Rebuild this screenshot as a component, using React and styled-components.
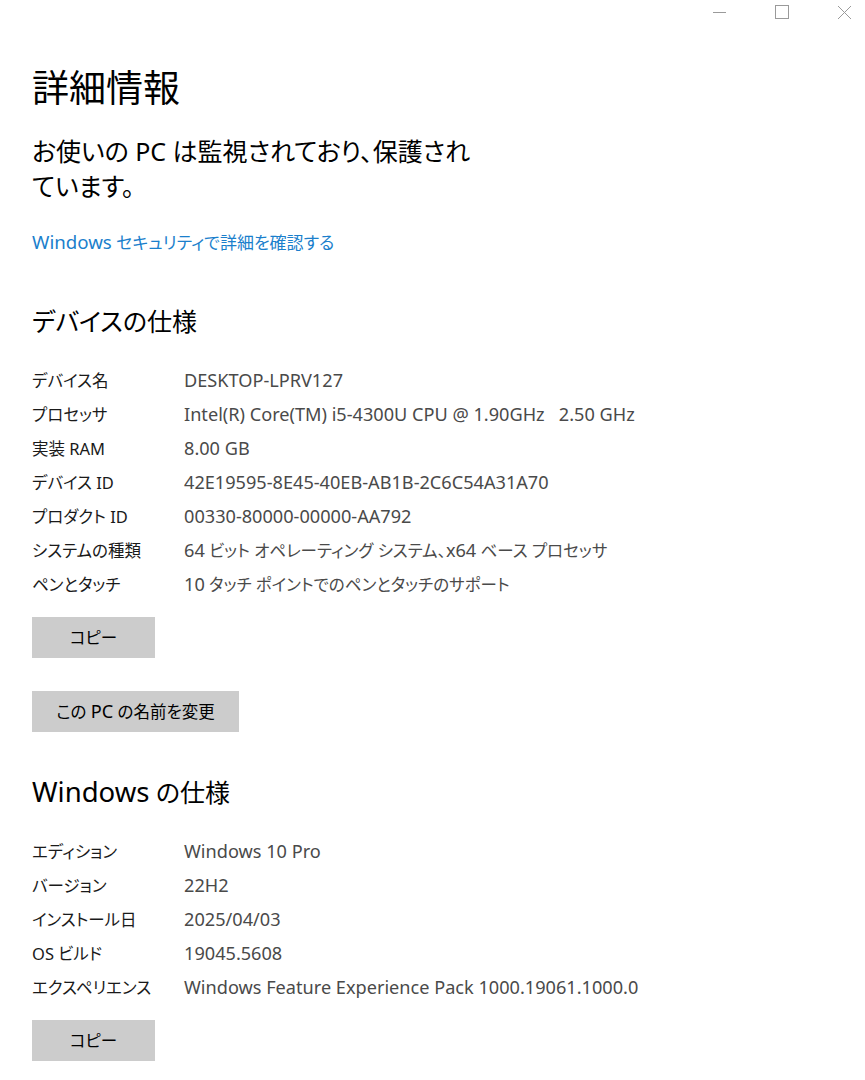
import styled, { createGlobalStyle } from "styled-components";

const GlobalStyle = createGlobalStyle`
    html, body {
        margin: 0;
        padding: 0;
        background: #ffffff;
        overflow: hidden;
    }
    body {
        font-family: "Noto Sans", "Noto Sans CJK JP", sans-serif;
        font-feature-settings: "palt";
        color: #000;
    }
`;

const deviceSpecs = [
    ["デバイス名", "DESKTOP-LPRV127"],
    ["プロセッサ", "Intel(R) Core(TM) i5-4300U CPU @ 1.90GHz\u00a0\u00a0 2.50 GHz"],
    ["実装 RAM", "8.00 GB"],
    ["デバイス ID", "42E19595-8E45-40EB-AB1B-2C6C54A31A70"],
    ["プロダクト ID", "00330-80000-00000-AA792"],
    ["システムの種類", "64 ビット オペレーティング システム、x64 ベース プロセッサ"],
    ["ペンとタッチ", "10 タッチ ポイントでのペンとタッチのサポート"],
];

const windowsSpecs = [
    ["エディション", "Windows 10 Pro"],
    ["バージョン", "22H2"],
    ["インストール日", "2025/04/03"],
    ["OS ビルド", "19045.5608"],
    ["エクスペリエンス", "Windows Feature Experience Pack 1000.19061.1000.0"],
];

const Mixed = ({ text }) =>
    text.split(/([\x21-\x7E\u00a0]+(?:[ \u00a0]+[\x21-\x7E\u00a0]+)*)/).map((part, i) =>
        i % 2 === 1 ? <Latin key={i}>{part}</Latin> : part
    );

const SpecTable = ({ rows }) => (
    <SpecList>
        {rows.map(([label, value]) => (
            <SpecRow key={label}>
                <Label>{label}</Label>
                <Value><Mixed text={value} /></Value>
            </SpecRow>
        ))}
    </SpecList>
);

export default function App() {
    return (
        <>
            <GlobalStyle />
            <TitleBar>
                <WinButton aria-label="最小化">
                    <svg width="14" height="14" viewBox="0 0 14 14">
                        <path d="M0 7.5h13" stroke="#9a9a9a" strokeWidth="1" />
                    </svg>
                </WinButton>
                <WinButton aria-label="最大化">
                    <svg width="14" height="14" viewBox="0 0 14 14">
                        <rect x="0.5" y="0.5" width="13" height="13" fill="none" stroke="#9a9a9a" strokeWidth="1" />
                    </svg>
                </WinButton>
                <WinButton aria-label="閉じる">
                    <svg width="15" height="15" viewBox="0 0 15 15">
                        <path d="M1 1l13 13M14 1L1 14" stroke="#9a9a9a" strokeWidth="1" />
                    </svg>
                </WinButton>
            </TitleBar>
            <Page>
                <Title>詳細情報</Title>
                <Status>お使いの PC は監視されており、保護されています。</Status>
                <Link href="#"><Mixed text="Windows セキュリティで詳細を確認する" /></Link>

                <SectionHeader>デバイスの仕様</SectionHeader>
                <SpecTable rows={deviceSpecs} />
                <Button $width="123px" $top="16px">コピー</Button>
                <Button $width="207px" $top="33px"><Mixed text="この PC の名前を変更" /></Button>

                <SectionHeader $top="43px"><Mixed text="Windows の仕様" /></SectionHeader>
                <SpecTable rows={windowsSpecs} />
                <Button $width="123px" $top="16px">コピー</Button>
            </Page>
        </>
    );
}

const TitleBar = styled.div`
    display: flex;
    justify-content: flex-end;
    height: 26px;
    margin-right: -10px;
`;

const WinButton = styled.div`
    width: 62px;
    display: flex;
    align-items: center;
    justify-content: center;
    padding-bottom: 2px;
`;

const Page = styled.main`
    display: flex;
    flex-direction: column;
    align-items: flex-start;
    padding: 0 32px;
`;

const Latin = styled.span`
    font-size: 1.1em;
    line-height: 1;
`;

const Title = styled.h1`
    margin: 38px 0 0;
    font-size: 37px;
    line-height: 48px;
    font-weight: 400;
    color: #000;
`;

const Status = styled.p`
    margin: 22px 0 0;
    max-width: 446px;
    font-size: 25px;
    line-height: 35px;
    color: #000;
`;

const Link = styled.a`
    margin-top: 27px;
    font-size: 17px;
    line-height: 24px;
    color: #1b7fcc;
    text-decoration: none;
`;

const SectionHeader = styled.h2`
    margin: ${(p) => p.$top || "49px"} 0 0;
    font-size: 25px;
    line-height: 34px;
    font-weight: 400;
    color: #000;
`;

const SpecList = styled.div`
    display: flex;
    flex-direction: column;
    margin-top: 25px;
`;

const SpecRow = styled.div`
    display: grid;
    grid-template-columns: 152px auto;
    height: 34px;
    align-items: center;
    font-size: 16.5px;
`;

const Label = styled.span`
    color: #1a1a1a;
    white-space: nowrap;
`;

const Value = styled.span`
    color: #4a4a4a;
    white-space: nowrap;
`;

const Button = styled.div`
    margin-top: ${(p) => p.$top};
    width: ${(p) => p.$width};
    height: 41px;
    line-height: 41px;
    text-align: center;
    white-space: nowrap;
    background: #cccccc;
    font-size: 16.5px;
    color: #000;
`;
